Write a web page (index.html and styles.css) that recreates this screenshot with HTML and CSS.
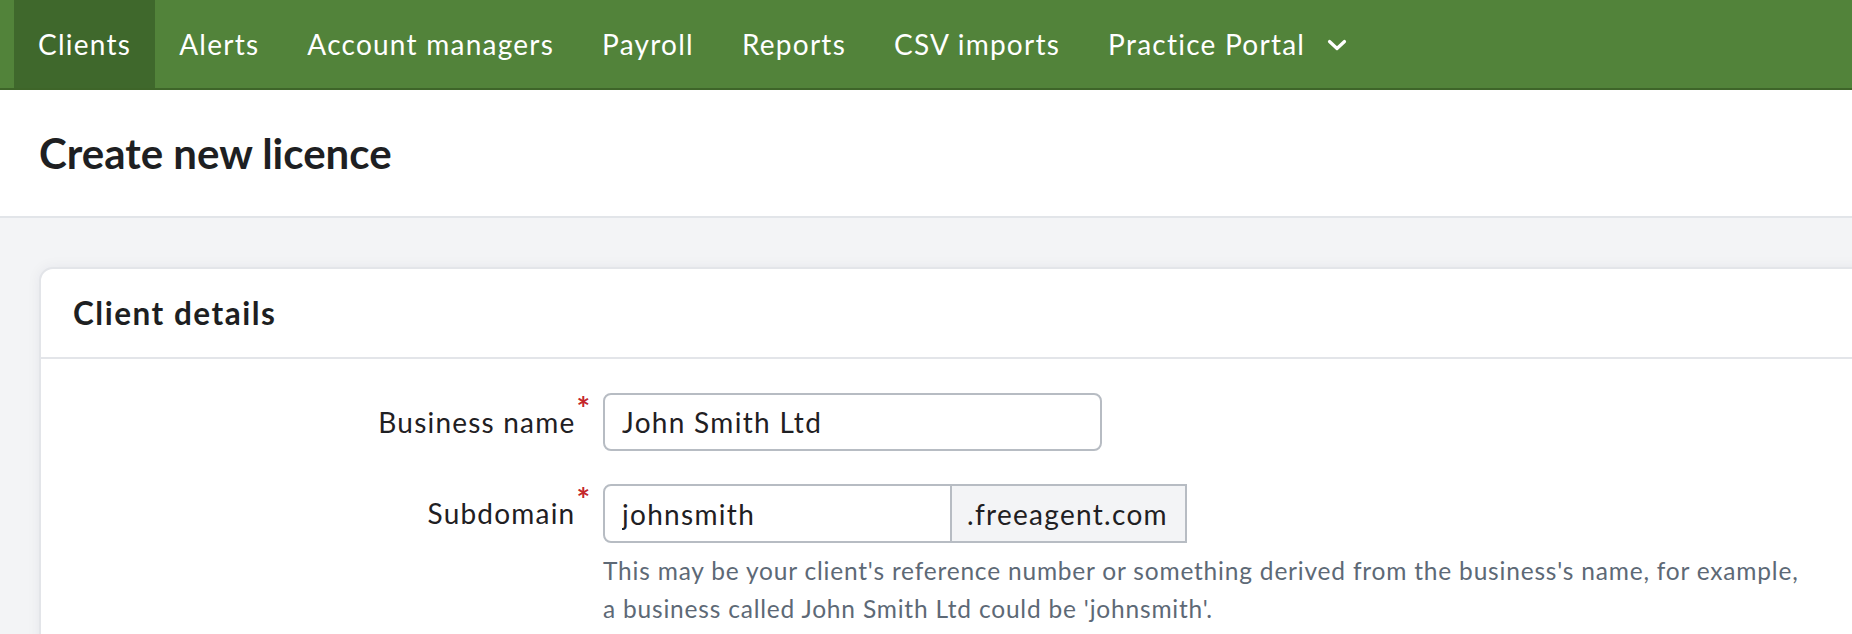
FILE: index.html
```html
<!DOCTYPE html>
<html lang="en">
<head>
<meta charset="utf-8">
<title>Create new licence</title>
<link rel="stylesheet" href="styles.css">
</head>
<body>
<nav class="topnav">
  <a class="nav-item active" href="#">Clients</a>
  <a class="nav-item" href="#">Alerts</a>
  <a class="nav-item" href="#">Account managers</a>
  <a class="nav-item" href="#">Payroll</a>
  <a class="nav-item" href="#">Reports</a>
  <a class="nav-item" href="#">CSV imports</a>
  <a class="nav-item" href="#">Practice Portal
    <svg class="chevron" width="20" height="12" viewBox="0 0 20 12" aria-hidden="true"><path d="M2.5 2.5 L10 9.5 L17.5 2.5" fill="none" stroke="#fff" stroke-width="3.2" stroke-linecap="round" stroke-linejoin="round"/></svg>
  </a>
</nav>
<header class="page-header">
  <h1 class="page-title">Create new licence</h1>
</header>
<main class="content">
  <section class="card">
    <div class="card-header">
      <h2 class="card-title">Client details</h2>
    </div>
    <div class="card-body">
      <div class="form-row">
        <label class="form-label" for="bname">Business name<span class="req">*</span></label>
        <div class="form-field">
          <input class="text-input" id="bname" type="text" value="John Smith Ltd">
        </div>
      </div>
      <div class="form-row">
        <label class="form-label" for="sub">Subdomain<span class="req">*</span></label>
        <div class="form-field">
          <div class="input-group">
            <input class="text-input group-input" id="sub" type="text" value="johnsmith">
            <span class="addon">.freeagent.com</span>
          </div>
          <p class="help">This may be your client's reference number or something derived from the business's name, for example,<br>a business called John Smith Ltd could be 'johnsmith'.</p>
        </div>
      </div>
    </div>
  </section>
</main>
</body>
</html>
```
FILE: styles.css
```css
* { box-sizing: border-box; }
html, body {
  margin: 0;
  padding: 0;
  overflow: hidden;
}
body {
  font-family: Lato, "Open Sans", sans-serif;
  color: #1f2023;
  background: #f3f4f6;
  height: 634px;
}
.topnav {
  display: flex;
  align-items: stretch;
  height: 90px;
  padding-left: 14px;
  background: #52833a;
  border-bottom: 2px solid #3e6529;
}
.nav-item {
  display: flex;
  align-items: center;
  gap: 22px;
  padding: 0 24px;
  color: #ffffff;
  text-decoration: none;
  font-size: 28px;
  letter-spacing: 1.25px;
}
.nav-item.active {
  background: #3f682c;
}
.chevron { display: block; margin-top: 2px; }
.page-header {
  display: flex;
  align-items: center;
  height: 128px;
  padding: 0 39px;
  background: #ffffff;
  border-bottom: 2px solid #e2e5e9;
}
.page-title {
  margin: 0;
  font-size: 42px;
  font-weight: 700;
  color: #1e1f22;
}
.content {
  padding: 49px 0 0 39px;
}
.card {
  margin-right: -40px;
  background: #ffffff;
  border: 2px solid #e3e5e9;
  border-radius: 14px 0 0 0;
  box-shadow: 0 0 14px rgba(30, 40, 60, 0.06);
  min-height: 400px;
}
.card-header {
  display: flex;
  align-items: center;
  height: 90px;
  padding-left: 32px;
  border-bottom: 2px solid #e3e5e9;
}
.card-title {
  margin: 0;
  font-size: 31.5px;
  font-weight: 700;
  letter-spacing: 1.5px;
  color: #1e1f22;
}
.card-body {
  padding-top: 34px;
  display: flex;
  flex-direction: column;
  gap: 33px;
}
.form-row {
  display: grid;
  grid-template-columns: 549px 1fr;
  column-gap: 13px;
  align-items: start;
}
.form-label {
  text-align: right;
  font-size: 28px;
  line-height: 58px;
  letter-spacing: 1.2px;
  color: #1f2023;
}
.req {
  color: #c4262b;
  font-size: 32px;
  font-weight: 700;
  line-height: 1;
  vertical-align: 12px;
  margin-left: 1px;
  letter-spacing: 0;
}
.text-input {
  display: block;
  width: 499px;
  height: 58px;
  padding: 0 17px;
  font-family: inherit;
  font-size: 28px;
  letter-spacing: 1.3px;
  color: #1f2023;
  border: 2px solid #b7bcc3;
  border-radius: 8px;
  background: #fff;
  outline: none;
}
.input-group {
  display: flex;
  width: 584px;
  height: 59px;
}
.group-input {
  width: 349px;
  height: 59px;
  border-radius: 8px 0 0 8px;
}
.addon {
  display: flex;
  align-items: center;
  width: 235px;
  padding-left: 15px;
  font-size: 28px;
  letter-spacing: 1.3px;
  color: #1f2023;
  background: #f3f4f6;
  border: 2px solid #b7bcc3;
  border-left: 0;
}
.help {
  margin: 9px 0 0;
  font-size: 24.5px;
  line-height: 38px;
  letter-spacing: 0.8px;
  color: #5d6976;
  white-space: nowrap;
}
```
